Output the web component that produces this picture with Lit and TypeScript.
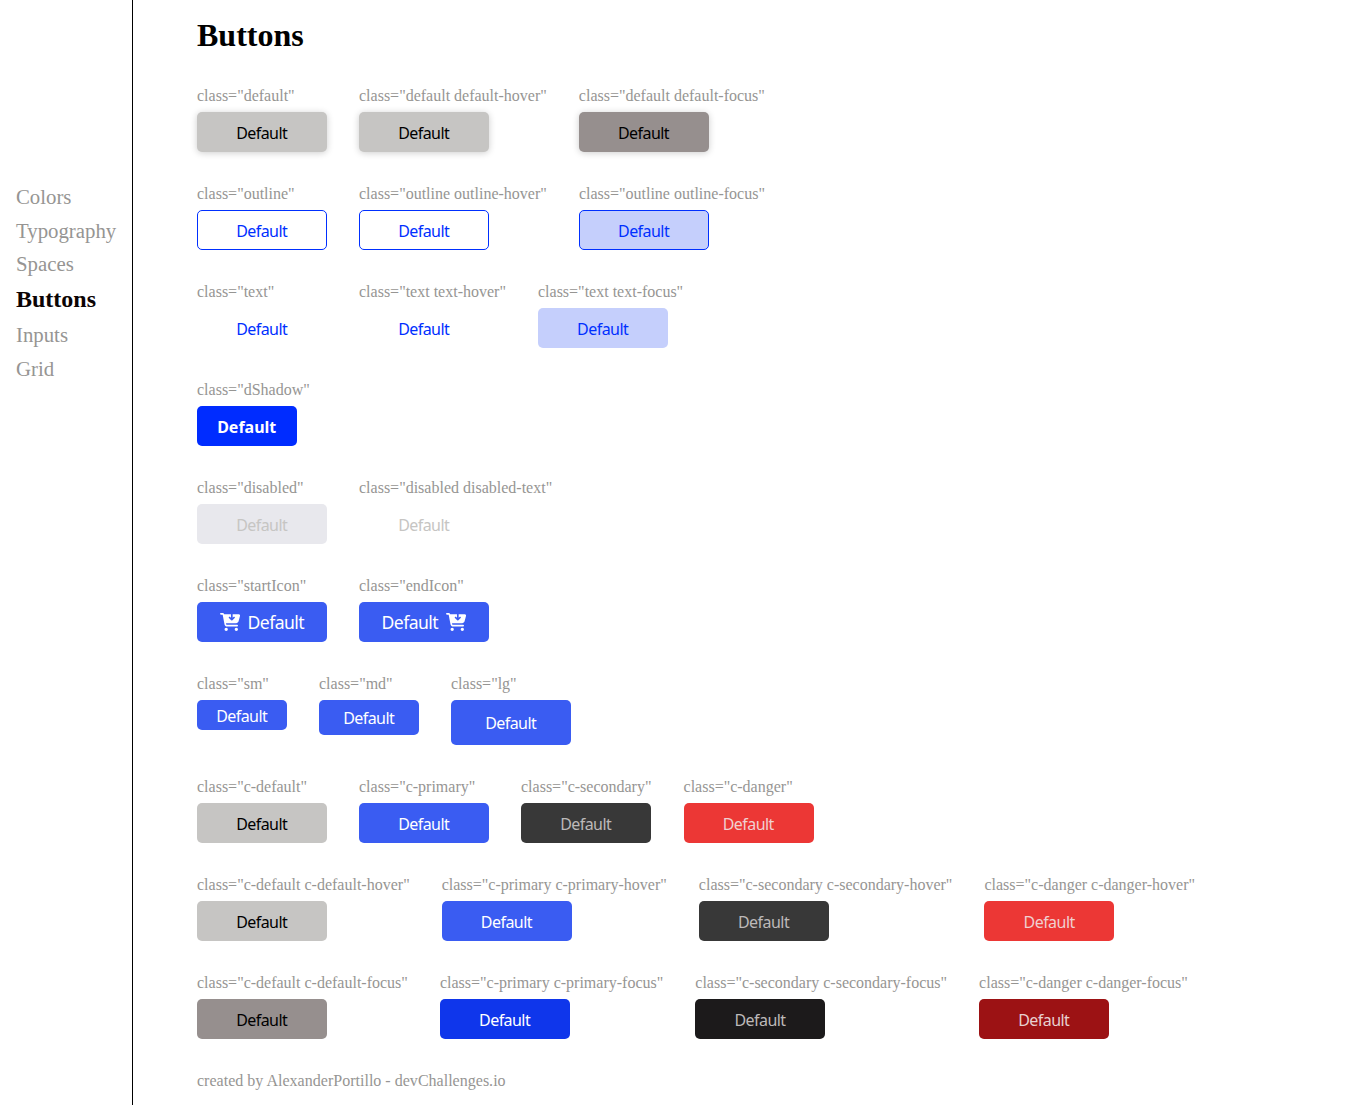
import { LitElement, html, css, svg, nothing } from "lit";
import { customElement, property } from "lit/decorators.js";

interface Sample {
  label: string;
  variant: string;
  icon?: "start" | "end";
}

const s = (label: string, variant: string = label, icon?: "start" | "end"): Sample => ({ label, variant, icon });

const ROWS: Sample[][] = [
  [s("default", "grey raised"), s("default default-hover", "grey raised"), s("default default-focus", "grey-focus raised")],
  [s("outline", "outline"), s("outline outline-hover", "outline"), s("outline outline-focus", "outline tinted")],
  [s("text", "text"), s("text text-hover", "text"), s("text text-focus", "text tinted")],
  [s("dShadow", "strong")],
  [s("disabled", "disabled"), s("disabled disabled-text", "disabled-text")],
  [s("startIcon", "primary with-icon start", "start"), s("endIcon", "primary with-icon", "end")],
  [s("sm", "primary sm"), s("md", "primary md"), s("lg", "primary lg")],
  [s("c-default", "grey"), s("c-primary", "primary"), s("c-secondary", "secondary"), s("c-danger", "danger")],
  [
    s("c-default c-default-hover", "grey"),
    s("c-primary c-primary-hover", "primary"),
    s("c-secondary c-secondary-hover", "secondary"),
    s("c-danger c-danger-hover", "danger"),
  ],
  [
    s("c-default c-default-focus", "grey-focus"),
    s("c-primary c-primary-focus", "primary-focus"),
    s("c-secondary c-secondary-focus", "secondary-focus"),
    s("c-danger c-danger-focus", "danger-focus"),
  ],
];

const cart = svg`<path fill="currentColor" d="M24 0C10.7 0 0 10.7 0 24S10.7 48 24 48H69.5c3.8 0 7.1 2.7 7.9 6.5l51.6 271c6.5 34 36.2 58.5 70.7 58.5H488c13.3 0 24-10.7 24-24s-10.7-24-24-24H199.7c-11.5 0-21.4-8.2-23.6-19.5L170.7 288H459.2c32.6 0 61.1-21.8 69.5-53.3l41-152.3C576.6 57 557.4 32 531.1 32H360V134.1l23-23c9.4-9.4 24.6-9.4 33.9 0s9.4 24.6 0 33.9l-64 64c-9.4 9.4-24.6 9.4-33.9 0l-64-64c-9.4-9.4-9.4-24.6 0-33.9s24.6-9.4 33.9 0l23 23V32H120.1C111 12.8 91.6 0 69.5 0H24zM176 512a48 48 0 1 0 0-96 48 48 0 1 0 0 96zm336-48a48 48 0 1 0-96 0 48 48 0 1 0 96 0z"/>`;

@customElement("demo-button")
export class DemoButton extends LitElement {
  @property() variant = "";
  @property() icon?: "start" | "end";

  static styles = css`
    :host { display: block; }
    .btn {
      display: flex;
      align-items: center;
      justify-content: center;
      box-sizing: border-box;
      width: 130px;
      height: 40px;
      margin: 0;
      padding: 2px 0.6px 0 0;
      border: 0;
      border-radius: 5px;
      background: transparent;
      font-family: Tahoma, "Noto Sans", sans-serif;
      font-size: 16px;
      line-height: 20px;
      letter-spacing: -0.55px;
    }
    .grey { background: #c6c5c3; color: #000; }
    .grey-focus { background: #968f8e; color: #000; }
    .raised { box-shadow: 0 1px 7px rgba(0, 0, 0, 0.2); }
    .outline { border: 1px solid #002fff; color: #002fff; }
    .text { color: #002fff; }
    .tinted { background: #c5cffc; }
    .strong { width: 100px; background: #002cff; color: #fff; font-weight: 700; letter-spacing: 0; }
    .disabled { background: #e8e8ed; color: #c6c5c3; }
    .disabled-text { color: #c6c5c3; }
    .primary { background: #3a5cf2; color: #fff; }
    .primary-focus { background: #0f36eb; color: #fff; }
    .secondary { background: #383838; color: #bdb9b9; }
    .secondary-focus { background: #1c1a1b; color: #bdb9b9; }
    .danger { background: #ec3735; color: #f0d0d0; }
    .danger-focus { background: #9c1214; color: #e8d0d0; }
    .with-icon { gap: 8px; padding: 0; font-size: 17.6px; }
    .start { gap: 7.5px; }
    .sm { width: 90px; height: 30px; }
    .md { width: 100px; height: 35px; padding-top: 1px; }
    .lg { width: 120px; height: 45px; padding-top: 1px; }
    .cart { display: block; width: 20.25px; height: 18px; }
  `;

  render() {
    const icon = html`<svg class="cart" viewBox="0 0 576 512">${cart}</svg>`;
    return html`<button class="btn ${this.variant}">
      ${this.icon === "start" ? icon : nothing}<span>Default</span>${this.icon === "end" ? icon : nothing}
    </button>`;
  }
}

@customElement("app-root")
export class AppRoot extends LitElement {
  static styles = css`
    :host {
      display: block;
      font-family: "Liberation Serif", serif;
      font-size: 16px;
      color: #969593;
    }
    .page { display: flex; height: 1105px; overflow: hidden; background: #fff; }
    .side {
      box-sizing: border-box;
      flex: none;
      width: 133px;
      padding: 185px 0 0 16px;
      border-right: 1px solid #000;
    }
    .nav { display: flex; flex-direction: column; gap: 10px; }
    .link { font-size: 20.8px; line-height: 23.7px; }
    .link.active { font-size: 24px; line-height: 27px; font-weight: 700; color: #0c0404; }
    .main { flex: 1; padding: 17px 0 0 64px; }
    .title { margin: 0 0 33px; font-size: 32px; line-height: 37px; font-weight: 700; color: #000; }
    .rows { display: flex; flex-direction: column; gap: 33px; }
    .row { display: flex; align-items: flex-start; gap: 32px; }
    .item { display: flex; flex-direction: column; gap: 7px; }
    .label { padding-right: 0.05px; line-height: 18px; white-space: nowrap; }
    .footer { margin-top: 33px; line-height: 18px; letter-spacing: 0.015px; }
  `;

  render() {
    return html`<div class="page">
      <aside class="side">
        <nav class="nav">
          ${["Colors", "Typography", "Spaces", "Buttons", "Inputs", "Grid"].map(
            (name) => html`<span class="link ${name === "Buttons" ? "active" : ""}">${name}</span>`
          )}
        </nav>
      </aside>
      <main class="main">
        <h1 class="title">Buttons</h1>
        <div class="rows">
          ${ROWS.map(
            (row) => html`<div class="row">
              ${row.map(
                (item) => html`<div class="item">
                  <span class="label">class="${item.label}"</span>
                  <demo-button .variant=${item.variant} .icon=${item.icon}></demo-button>
                </div>`
              )}
            </div>`
          )}
        </div>
        <div class="footer">created by AlexanderPortillo - devChallenges.io</div>
      </main>
    </div>`;
  }
}
